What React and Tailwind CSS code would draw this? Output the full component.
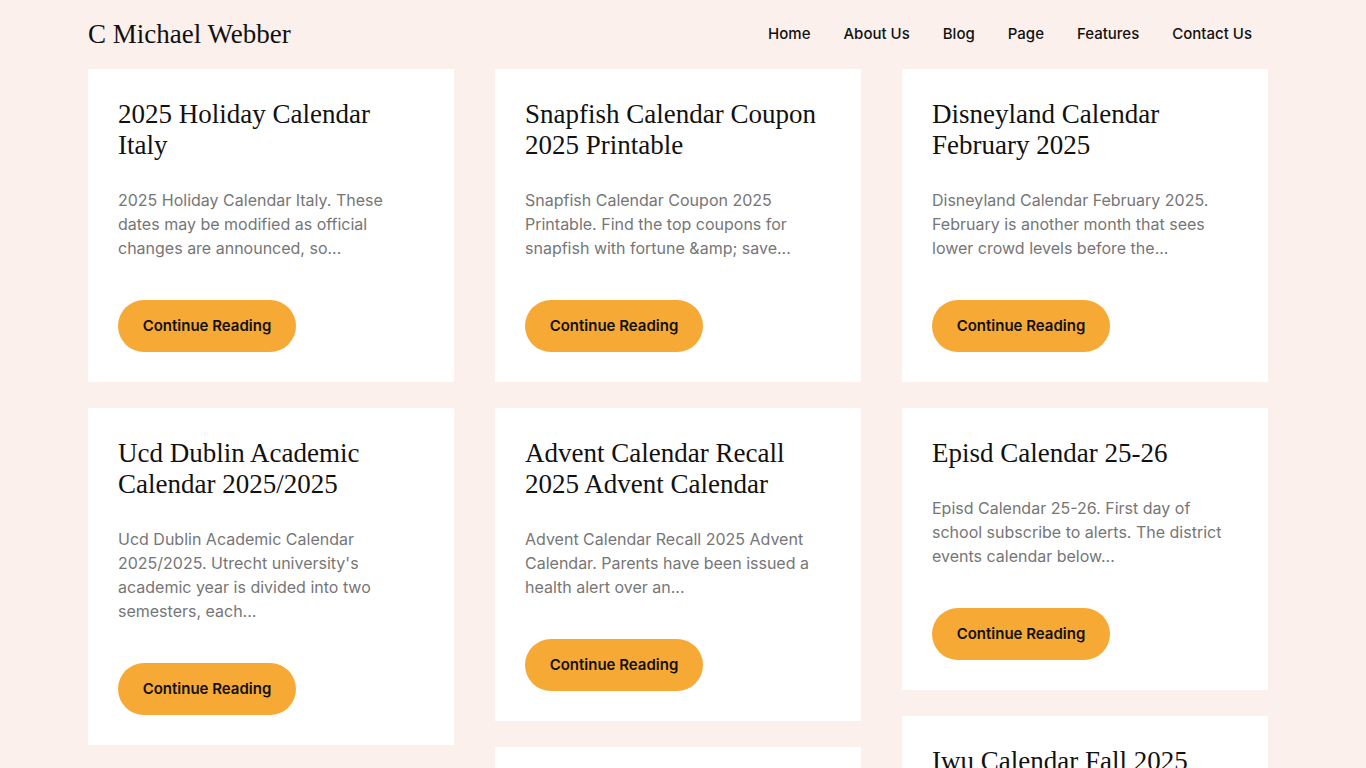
const cols = [
  [
    { t: "2025 Holiday Calendar Italy", d: "2025 Holiday Calendar Italy. These dates may be modified as official changes are announced, so..." },
    { t: "Ucd Dublin Academic Calendar 2025/2025", d: "Ucd Dublin Academic Calendar 2025/2025. Utrecht university's academic year is divided into two semesters, each..." },
    { t: "School Calendar 2025 Printable", d: "School Calendar 2025 Printable. Find the dates for the upcoming school year and plan ahead..." },
  ],
  [
    { t: "Snapfish Calendar Coupon 2025 Printable", d: "Snapfish Calendar Coupon 2025 Printable. Find the top coupons for snapfish with fortune &amp; save..." },
    { t: "Advent Calendar Recall 2025 Advent Calendar", d: "Advent Calendar Recall 2025 Advent Calendar. Parents have been issued a health alert over an..." },
    { t: "Monthly Calendar 2025 Template", d: "Monthly Calendar 2025 Template. Download and print free monthly templates for every month..." },
  ],
  [
    { t: "Disneyland Calendar February 2025", d: "Disneyland Calendar February 2025. February is another month that sees lower crowd levels before the..." },
    { t: "Episd Calendar 25-26", d: "Episd Calendar 25-26. First day of school subscribe to alerts. The district events calendar below..." },
    { t: "Iwu Calendar Fall 2025", d: "Iwu Calendar Fall 2025. View the academic calendar for important dates and deadlines this fall..." },
  ],
];

const serif = { fontFamily: '"Liberation Serif", "DejaVu Serif", serif' };

function Card({ t, d }) {
  return (
    <div className="bg-white px-[30px] pt-[30px] pb-[30px]">
      <h2 className="text-[27px] leading-[31px] font-medium text-[#111]" style={serif}>{t}</h2>
      <p className="mt-[27px] text-[16px] leading-[24px] text-[#767676]">{d}</p>
      <button className="mt-[40px] h-[52px] w-[178px] rounded-full bg-[#f6a935] text-[15px] font-semibold text-[#111]">Continue Reading</button>
    </div>
  );
}

export default function App() {
  return (
    <div className="min-h-screen bg-[#fbf0eb]" style={{ fontFamily: 'Inter, "Liberation Sans", sans-serif' }}>
      <div className="ml-[88px] w-[1180px]">
        <header className="flex h-[69px] items-center justify-between">
          <div className="text-[27px] font-medium text-[#111]" style={serif}>C Michael Webber</div>
          <nav className="flex gap-[33px] pr-[16px] text-[15px] font-medium text-[#111]">
            <span>Home</span><span>About Us</span><span>Blog</span><span>Page</span><span>Features</span><span>Contact Us</span>
          </nav>
        </header>
        <div className="grid grid-cols-3 gap-[41px] pb-10">
          {cols.map((c, i) => (
            <div key={i} className="flex flex-col gap-[26px]">
              {c.map((x) => <Card key={x.t} {...x} />)}
            </div>
          ))}
        </div>
      </div>
    </div>
  );
}
